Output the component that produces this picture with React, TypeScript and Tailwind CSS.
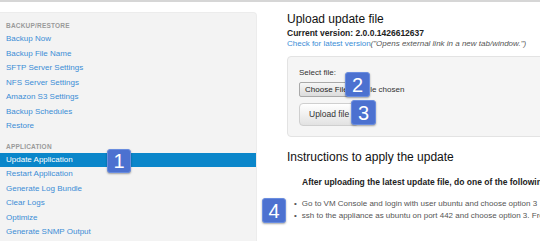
const BACKUP_LINKS = [
  "Backup Now",
  "Backup File Name",
  "SFTP Server Settings",
  "NFS Server Settings",
  "Amazon S3 Settings",
  "Backup Schedules",
  "Restore",
];

const APP_LINKS = [
  "Update Application",
  "Restart Application",
  "Generate Log Bundle",
  "Clear Logs",
  "Optimize",
  "Generate SNMP Output",
];

const ACTIVE = "Update Application";

function Badge({ n, className }: { n: number; className: string }) {
  return (
    <div
      className={`absolute flex items-center justify-center rounded-[3px] border border-[#6a8ddf] bg-[#4c71d0] text-[20px] leading-none text-white shadow-[0_1px_2px_rgba(0,0,0,0.35)] ${className}`}
    >
      {n}
    </div>
  );
}

function NavLink({ label }: { label: string }) {
  const active = label === ACTIVE;
  return (
    <div
      className={`h-[14.5px] pl-[6px] text-[8px] leading-[14.5px] whitespace-nowrap ${
        active ? "bg-[#0a86ca] text-white" : "text-[#3b8dd6]"
      }`}
    >
      {label}
    </div>
  );
}

function SectionHeader({ label, className = "" }: { label: string; className?: string }) {
  return (
    <div
      className={`h-[13px] pl-[6px] text-[6.5px] leading-[13px] font-bold tracking-[0.2px] text-[#9a9a9a] ${className}`}
    >
      {label}
    </div>
  );
}

export default function App() {
  return (
    <div className="relative h-[241px] w-[540px] overflow-hidden border-t-2 border-[#d6d6d6] bg-white font-['Liberation_Sans',Arial,sans-serif] text-[#333]">
      <div className="flex h-full">
        {/* sidebar */}
        <div className="mt-[10px] w-[257px] shrink-0 rounded-tr-[4px] border border-l-0 border-b-0 border-[#ececec] bg-[#f3f3f3] pt-[6px]">
          <SectionHeader label="BACKUP/RESTORE" />
          {BACKUP_LINKS.map((l) => (
            <NavLink key={l} label={l} />
          ))}
          <SectionHeader label="APPLICATION" className="mt-[6px]" />
          {APP_LINKS.map((l) => (
            <NavLink key={l} label={l} />
          ))}
        </div>

        {/* main content */}
        <div className="ml-[30px] flex min-w-0 flex-1 flex-col pt-[10px] whitespace-nowrap">
          <h1 className="text-[12px] leading-[15px] text-[#111]">Upload update file</h1>
          <div className="mt-[1px] text-[8.5px] leading-[11px] font-bold text-[#222]">
            Current version: 2.0.0.1426612637
          </div>
          <div className="text-[8px] leading-[10px]">
            <span className="text-[#3b8dd6]">Check for latest version</span>
            <span className="italic text-[#555]">("Opens external link in a new tab/window.")</span>
          </div>

          <div className="mt-[7px] -mr-[10px] rounded-[4px] border border-[#e3e3e3] bg-[#f5f5f5] px-[11px] pt-[11px] pb-[10px]">
            <div className="text-[8px] leading-[10px] text-[#333]">Select file:</div>
            <div className="mt-[4px] flex items-center gap-[2px]">
              <div className="flex h-[15px] items-center rounded-[2px] border border-[#a9a9a9] bg-gradient-to-b from-[#f6f6f6] to-[#dcdcdc] pr-[3px] pl-[5px] text-[8px] text-[#222]">
                Choose File
              </div>
              <span className="text-[8px] text-[#333]">No file chosen</span>
            </div>
            <div className="mt-[6px] flex">
              <div className="flex h-[23px] items-center rounded-[4px] border border-[#cfcfcf] bg-gradient-to-b from-white to-[#e2e2e2] px-[9px] text-[8.5px] text-[#333]">
                Upload file
              </div>
            </div>
          </div>

          <h2 className="mt-[13px] text-[12px] leading-[15px] text-[#111]">
            Instructions to apply the update
          </h2>
          <div className="mt-[12px] pl-[15px] text-[8.5px] leading-[11px] font-bold text-[#222]">
            After uploading the latest update file, do one of the following:
          </div>
          <ul className="mt-[10px] pl-[7px] text-[8px] leading-[11.5px] text-[#555]">
            <li className="flex gap-[5px]">
              <span>•</span>
              <span>Go to VM Console and login with user ubuntu and choose option 3</span>
            </li>
            <li className="flex gap-[5px]">
              <span>•</span>
              <span>
                ssh to the appliance as ubuntu on port 442 and choose option 3. From there follow the steps
              </span>
            </li>
          </ul>
        </div>
      </div>

      <Badge n={1} className="left-[107px] top-[147px] h-[24px] w-[24px]" />
      <Badge n={2} className="left-[345px] top-[70px] h-[25px] w-[25px]" />
      <Badge n={3} className="left-[351px] top-[98px] h-[25px] w-[25px]" />
      <Badge n={4} className="left-[262px] top-[196px] h-[25px] w-[24px]" />
    </div>
  );
}
